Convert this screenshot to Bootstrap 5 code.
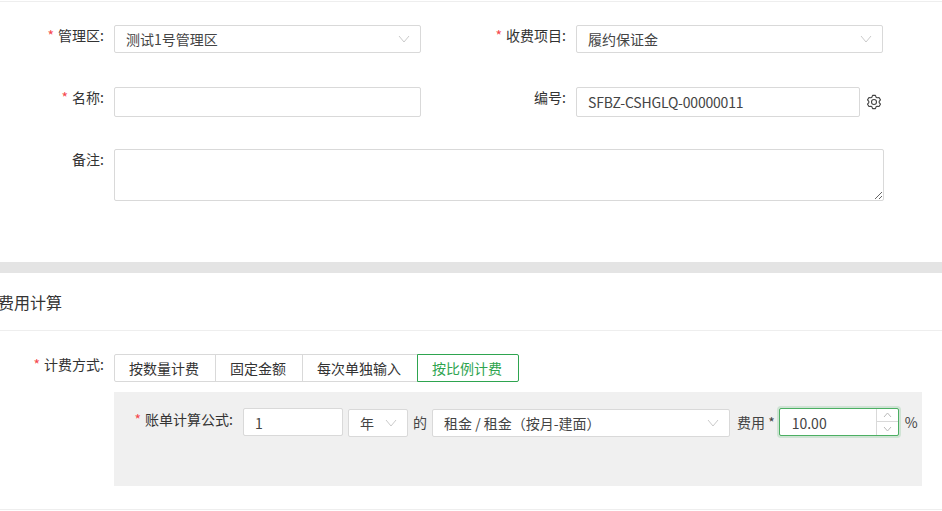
<!DOCTYPE html>
<html lang="zh">
<head>
<meta charset="utf-8">
<title>费用计算</title>
<link href="https://cdn.jsdelivr.net/npm/bootstrap@5.3.0/dist/css/bootstrap.min.css" rel="stylesheet">
<style>
html,body{height:511px;overflow:hidden}
body{background:#fff;color:#333;font-family:"Noto Sans CJK SC","Liberation Sans",sans-serif;font-size:14px;line-height:20px}
.sheet{padding-top:1px}
.sheet-in{border-top:1px solid #eee;padding-top:23px}
.lbl{flex:none;text-align:right;color:#333;line-height:20px}
.lbl-a{width:104px}.lbl-b{width:145px}.lbl-c{width:119px;padding-top:1px}
.req{color:#f5484d;margin-right:4px}
.ctl-w{width:307px;flex:none}
.form-control,.form-select{border:1px solid #d9d9d9;border-radius:2px;font-size:14px;color:#444;padding:0 11px;height:28px;line-height:26px;box-shadow:none;background-color:#fff;font-family:inherit}
.h30{height:30px}
.form-select{background-image:url("data:image/svg+xml,%3Csvg xmlns='http://www.w3.org/2000/svg' viewBox='0 0 12 8'%3E%3Cpath d='M1 1l5 6L11 1' fill='none' stroke='%23c4c4c4' stroke-width='.9'/%3E%3C/svg%3E");background-size:12px 8px;background-position:right 10px center;padding:0 26px 3px 11px}
.row-1{margin-bottom:34px}.row-2{margin-bottom:32px}
.note{width:770px;height:52px;margin-bottom:61px}
.code{width:284px;flex:none}
.code .form-control{letter-spacing:-.2px}
.band{height:11px;background:#e4e4e4}
.ttl{height:57px;line-height:59px;font-size:16px;margin-left:-2px;color:#333}
.rule{border-bottom:1px solid #eee}
.calc{padding-top:23px}
.mode{height:28px;margin-bottom:10px}
.mode .btn{font-size:14px;color:#333;border:1px solid #d9d9d9;border-radius:0;padding:0 16px 0 14px;line-height:26px;background:#fff;font-family:inherit;white-space:nowrap}
.mode .btn:first-child{border-radius:2px 0 0 2px}
.mode .btn:last-child{border-radius:0 2px 2px 0}
.mode .btn.on{border-color:#2ea44f;color:#2ea44f;position:relative;z-index:1}
.panel{width:808px;height:94px;background:#f0f0f0;padding-top:16px}
.u-w{width:100px;flex:none}
.u-w .form-control{padding-top:2px}
.p-w{width:60px;flex:none;margin-top:1px}
.r-w{width:298px;flex:none;margin-top:1px}
.txt{line-height:28px;flex:none;color:#444}
.spin-w{width:120px;flex:none;height:28px}
.spin-w .form-control{border-color:#4caf63;box-shadow:0 0 0 2px rgba(76,175,99,.2);width:100%;padding:2px 12px 0}
.spin{top:1px;right:1px;width:22px;height:26px;border-left:1px solid #d9d9d9}
.spin span{height:13px;line-height:0}
.spin span:first-child{border-bottom:1px solid #d9d9d9}
.end{height:24px}
.ms-2b{margin-left:10px}.ms-1c{margin-left:5px}.ms-1d{margin-left:7px}.ms-1e{margin-left:4px}.ms-gear{margin-left:6px}
</style>
</head>
<body>
<div class="sheet"><div class="sheet-in">
  <form>
    <div class="d-flex row-1">
      <div class="lbl lbl-a"><span class="req">*</span>管理区:</div>
      <div class="ctl-w ms-2b"><select class="form-select"><option>测试1号管理区</option></select></div>
      <div class="lbl lbl-b"><span class="req">*</span>收费项目:</div>
      <div class="ctl-w ms-2b"><select class="form-select"><option>履约保证金</option></select></div>
    </div>
    <div class="d-flex row-2">
      <div class="lbl lbl-a"><span class="req">*</span>名称:</div>
      <div class="ctl-w ms-2b"><input class="form-control h30" type="text"></div>
      <div class="lbl lbl-b">编号:</div>
      <div class="code ms-2b"><input class="form-control h30" type="text" value="SFBZ-CSHGLQ-00000011"></div>
      <div class="d-flex align-items-center ms-gear">
        <svg width="16" height="16" viewBox="0 0 16 16" fill="none" stroke="#444" stroke-width="1.1" stroke-linejoin="round"><polygon points="6.59,1.35 9.41,1.35 10.11,3.25 11.06,3.79 13.05,3.45 14.47,5.9 13.17,7.46 13.17,8.54 14.47,10.1 13.05,12.55 11.06,12.21 10.11,12.75 9.41,14.65 6.59,14.65 5.89,12.75 4.94,12.21 2.95,12.55 1.53,10.1 2.83,8.54 2.83,7.46 1.53,5.9 2.95,3.45 4.94,3.79 5.89,3.25"/><circle cx="8" cy="8" r="2.5"/></svg>
      </div>
    </div>
    <div class="d-flex">
      <div class="lbl lbl-a">备注:</div>
      <div class="ms-2b"><textarea class="form-control note"></textarea></div>
    </div>
  </form>
  <div class="band"></div>
  <div class="ttl">费用计算</div>
  <div class="rule"></div>
  <div class="calc">
    <div class="d-flex">
      <div class="lbl lbl-a"><span class="req">*</span>计费方式:</div>
      <div class="ms-2b">
        <div class="btn-group mode" role="group">
          <button type="button" class="btn">按数量计费</button>
          <button type="button" class="btn">固定金额</button>
          <button type="button" class="btn">每次单独输入</button>
          <button type="button" class="btn on">按比例计费</button>
        </div>
        <div class="panel d-flex">
          <div class="lbl lbl-c"><span class="req">*</span>账单计算公式:</div>
          <div class="u-w ms-2b"><input class="form-control" type="text" value="1"></div>
          <div class="p-w ms-1c"><select class="form-select"><option>年</option></select></div>
          <div class="txt ms-1c">的</div>
          <div class="r-w ms-1c"><select class="form-select"><option>租金 / 租金（按月-建面）</option></select></div>
          <div class="txt ms-1d">费用 *</div>
          <div class="spin-w position-relative ms-1e">
            <input class="form-control" type="text" value="10.00">
            <div class="spin position-absolute d-flex flex-column">
              <span class="d-flex align-items-center justify-content-center"><svg width="9" height="6" viewBox="0 0 9 6" fill="none" stroke="#bbb"><path d="M1 5l3.5-4L8 5"/></svg></span>
              <span class="d-flex align-items-center justify-content-center"><svg width="9" height="6" viewBox="0 0 9 6" fill="none" stroke="#bbb"><path d="M1 1l3.5 4L8 1"/></svg></span>
            </div>
          </div>
          <div class="txt ms-gear">%</div>
        </div>
      </div>
    </div>
    <div class="end rule"></div>
  </div>
</div></div>
<script src="https://cdn.jsdelivr.net/npm/bootstrap@5.3.0/dist/js/bootstrap.bundle.min.js"></script>
</body>
</html>
